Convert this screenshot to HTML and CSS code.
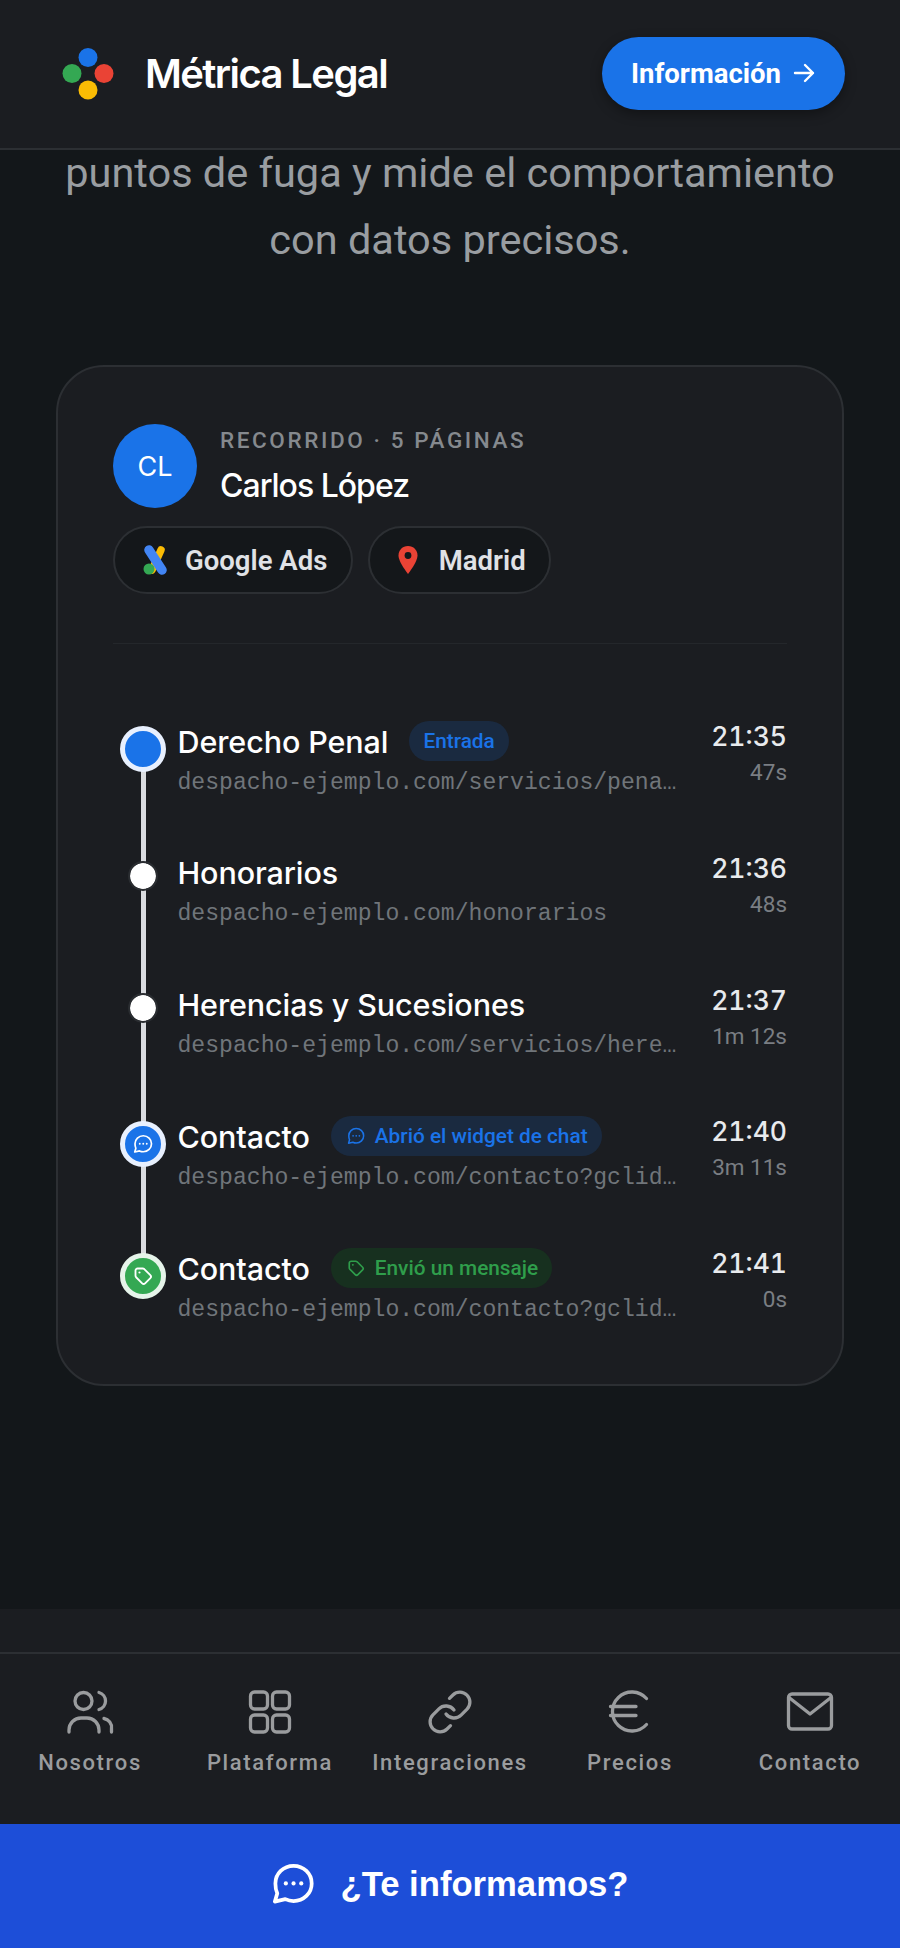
FILE: index.html
```html
<!DOCTYPE html>
<html lang="es">
<head>
<meta charset="utf-8">
<title>Métrica Legal</title>
<link rel="stylesheet" href="styles.css">
</head>
<body>
<svg class="defs" width="0" height="0" aria-hidden="true">
  <defs>
    <symbol id="chat" viewBox="0 0 40 40">
      <path d="M20.500 3.500c9.200 0 16.500 7 16.500 16s-7.300 16-16.500 16c-2.700 0-5.200-.6-7.500-1.700L3.500 36l2.200-7.500C4.500 26 4 23.100 4 19.500c0-9 7.300-16 16.500-16z" fill="none" stroke="currentColor" stroke-width="3.400" stroke-linejoin="round"/>
      <circle cx="13.500" cy="19.500" r="1.900" fill="currentColor"/>
      <circle cx="20.500" cy="19.500" r="1.900" fill="currentColor"/>
      <circle cx="27.500" cy="19.500" r="1.900" fill="currentColor"/>
    </symbol>
    <symbol id="tag" viewBox="0 0 24 24">
      <path d="M3 5.500A2.500 2.500 0 0 1 5.500 3h6.200c.7 0 1.300.3 1.800.7l7.300 7.300c1 1 1 2.500 0 3.500l-6.300 6.300c-1 1-2.500 1-3.500 0l-7.300-7.300c-.4-.5-.7-1.100-.7-1.800z" fill="none" stroke="currentColor" stroke-width="2.200" stroke-linejoin="round"/>
      <circle cx="7.800" cy="7.800" r="1.300" fill="currentColor"/>
    </symbol>
  </defs>
</svg>

<header class="topbar">
  <div class="brand">
    <svg class="brand-mark" viewBox="0 0 52 52" aria-hidden="true">
      <circle cx="26" cy="9.500" r="9.500" fill="#1a73e8"/>
      <circle cx="10" cy="25.500" r="9.500" fill="#34a853"/>
      <circle cx="42" cy="25.500" r="9.500" fill="#ea4335"/>
      <circle cx="26" cy="42" r="9.500" fill="#fbbc04"/>
    </svg>
    <span class="brand-name">Métrica Legal</span>
  </div>
  <a class="info-btn">Información
    <svg class="info-arrow" viewBox="0 0 24 24" aria-hidden="true"><path d="M3 12h18M13 4l8 8-8 8" fill="none" stroke="currentColor" stroke-width="2.400" stroke-linecap="round" stroke-linejoin="round"/></svg>
  </a>
</header>

<main class="page">
  <p class="lead">puntos de fuga y mide el comportamiento<br>con datos precisos.</p>

  <section class="card">
    <div class="person">
      <div class="avatar">CL</div>
      <div class="person-text">
        <div class="eyebrow">RECORRIDO · 5 PÁGINAS</div>
        <div class="person-name">Carlos López</div>
      </div>
    </div>
    <div class="chips">
      <span class="chip chip-source">
        <svg class="chip-ads" viewBox="0 0 24 30" aria-hidden="true">
          <path d="M18 5 9 25" stroke="#fbbc04" stroke-width="7.500" stroke-linecap="round"/>
          <circle cx="6" cy="24" r="5.500" fill="#34a853"/>
          <path d="M6 5 19 25" stroke="#4285f4" stroke-width="9.500" stroke-linecap="round"/>
        </svg>
        Google Ads
      </span>
      <span class="chip chip-place">
        <svg class="chip-pin" viewBox="0 0 20 28" aria-hidden="true">
          <path d="M10 0C4.500 0 .5 4.200.5 9.500.5 16 10 28 10 28s9.500-12 9.500-18.500C19.500 4.200 15.500 0 10 0z" fill="#ea4335"/>
          <circle cx="10" cy="9.500" r="3.400" fill="#14171a"/>
        </svg>
        Madrid
      </span>
    </div>
    <hr class="divider">

    <ol class="timeline">
      <li class="step">
        <span class="dot dot-blue"></span>
        <div class="step-main">
          <div class="step-head"><span class="step-title">Derecho Penal</span><span class="badge badge-blue">Entrada</span></div>
          <div class="step-url">despacho-ejemplo.com/servicios/pena…</div>
        </div>
        <div class="step-time"><span class="clock">21:35</span><span class="dur">47s</span></div>
      </li>
      <li class="step">
        <span class="dot dot-small"></span>
        <div class="step-main">
          <div class="step-head"><span class="step-title">Honorarios</span></div>
          <div class="step-url">despacho-ejemplo.com/honorarios</div>
        </div>
        <div class="step-time"><span class="clock">21:36</span><span class="dur">48s</span></div>
      </li>
      <li class="step">
        <span class="dot dot-small"></span>
        <div class="step-main">
          <div class="step-head"><span class="step-title">Herencias y Sucesiones</span></div>
          <div class="step-url">despacho-ejemplo.com/servicios/here…</div>
        </div>
        <div class="step-time"><span class="clock">21:37</span><span class="dur">1m 12s</span></div>
      </li>
      <li class="step">
        <span class="dot dot-blue dot-icon"><svg class="dot-glyph" aria-hidden="true"><use href="#chat"/></svg></span>
        <div class="step-main">
          <div class="step-head"><span class="step-title">Contacto</span><span class="badge badge-blue"><svg class="badge-icon" aria-hidden="true"><use href="#chat"/></svg>Abrió el widget de chat</span></div>
          <div class="step-url">despacho-ejemplo.com/contacto?gclid…</div>
        </div>
        <div class="step-time"><span class="clock">21:40</span><span class="dur">3m 11s</span></div>
      </li>
      <li class="step">
        <span class="dot dot-green dot-icon"><svg class="dot-glyph" aria-hidden="true"><use href="#tag"/></svg></span>
        <div class="step-main">
          <div class="step-head"><span class="step-title">Contacto</span><span class="badge badge-green"><svg class="badge-icon" aria-hidden="true"><use href="#tag"/></svg>Envió un mensaje</span></div>
          <div class="step-url">despacho-ejemplo.com/contacto?gclid…</div>
        </div>
        <div class="step-time"><span class="clock">21:41</span><span class="dur">0s</span></div>
      </li>
    </ol>
  </section>
</main>

<div class="band"></div>

<nav class="tabs">
  <a class="tab">
    <svg class="tab-icon" viewBox="0 0 48 48" aria-hidden="true">
      <circle cx="17.500" cy="13" r="8.500"/>
      <path d="M33 4.500a8.800 8.800 0 0 1 0 17"/>
      <path d="M3 44v-2a12 12 0 0 1 12-12h6a12 12 0 0 1 12 12v2"/>
      <path d="M38 30.500a9 9 0 0 1 7.500 10V44"/>
    </svg>
    Nosotros
  </a>
  <a class="tab">
    <svg class="tab-icon" viewBox="0 0 48 48" aria-hidden="true">
      <rect x="4.500" y="4" width="17" height="17" rx="4"/>
      <rect x="26.500" y="4" width="17" height="17" rx="4"/>
      <rect x="4.500" y="27" width="17" height="17" rx="4"/>
      <rect x="26.500" y="27" width="17" height="17" rx="4"/>
    </svg>
    Plataforma
  </a>
  <a class="tab">
    <svg class="tab-icon" viewBox="0 0 24 24" aria-hidden="true">
      <path class="thin" d="M10 13a5 5 0 0 0 7.540.54l3-3a5 5 0 0 0-7.070-7.070l-1.720 1.710"/>
      <path class="thin" d="M14 11a5 5 0 0 0-7.540-.54l-3 3a5 5 0 0 0 7.070 7.070l1.710-1.710"/>
    </svg>
    Integraciones
  </a>
  <a class="tab">
    <svg class="tab-icon" viewBox="0 0 48 48" aria-hidden="true">
      <path d="M40.500 10.500A19.500 19.500 0 1 0 40.500 36.500"/>
      <path d="M4.500 18.500H30M4.500 27.500H30"/>
    </svg>
    Precios
  </a>
  <a class="tab">
    <svg class="tab-icon" viewBox="0 0 48 48" aria-hidden="true">
      <rect x="2.500" y="6" width="43" height="35" rx="3.500"/>
      <path d="M3 9.500 24 26 45 9.500"/>
    </svg>
    Contacto
  </a>
</nav>

<a class="cta">
  <svg class="cta-icon" aria-hidden="true"><use href="#chat"/></svg>
  ¿Te informamos?
</a>
</body>
</html>
```
FILE: styles.css
```css
* { box-sizing: border-box; }
html, body { margin: 0; padding: 0; }
body {
  width: 900px;
  height: 1948px;
  overflow: hidden;
  display: flex;
  flex-direction: column;
  background: #13171a;
  font-family: Roboto, "Liberation Sans", sans-serif;
  color: #fff;
}
.defs { position: absolute; }

.topbar {
  position: relative;
  z-index: 2;
  flex: none;
  height: 150px;
  display: flex;
  align-items: center;
  justify-content: space-between;
  padding: 0 55px 2px 62px;
  background: #1b1d21;
  border-bottom: 2px solid #2c2f33;
}
.brand { display: flex; align-items: center; gap: 31px; }
.brand-mark { width: 52px; height: 52px; margin-top: 2px; }
.brand-name {
  font-family: Inter, sans-serif;
  font-size: 40px;
  font-weight: 600;
  letter-spacing: -1.600px;
  color: #fff;
}
.info-btn {
  width: 243px;
  height: 73px;
  display: flex;
  align-items: center;
  justify-content: center;
  gap: 11px;
  border-radius: 37px;
  background: #1a73e8;
  color: #fff;
  font-size: 27.500px;
  font-weight: 700;
  box-shadow: 0 4px 12px rgba(0, 0, 0, .35);
}
.info-arrow { width: 24px; height: 24px; }

.page { flex: 1; display: flex; flex-direction: column; align-items: center; }
.lead {
  margin: -11px 0 0;
  width: 100%;
  text-align: center;
  font-size: 41.500px;
  line-height: 67px;
  color: #999da1;
}
.card {
  width: 788px;
  height: 1021px;
  margin: 92px 0 0;
  padding: 57px 55px 0 55px;
  background: #1b1d21;
  border: 2px solid #2c2f33;
  border-radius: 48px;
}
.person { display: flex; align-items: center; gap: 23px; }
.avatar {
  width: 84px;
  height: 84px;
  flex: none;
  display: flex;
  align-items: center;
  justify-content: center;
  border-radius: 50%;
  background: #1a73e8;
  font-family: Inter, sans-serif;
  font-size: 27px;
  font-weight: 400;
}
.person-text { display: flex; flex-direction: column; gap: 12px; }
.eyebrow { font-size: 22.500px; font-weight: 500; letter-spacing: 2.600px; color: #85898e; line-height: 28px; }
.person-name { font-family: Inter, sans-serif; font-size: 32px; font-weight: 500; letter-spacing: -1px; line-height: 40px; color: #fff; }

.chips { display: flex; gap: 15px; margin-top: 18px; }
.chip {
  height: 68px;
  display: flex;
  align-items: center;
  padding: 0 23.500px 0 28px;
  background: #14171a;
  border: 2px solid #2c2f33;
  border-radius: 34px;
  font-size: 27.500px;
  font-weight: 600;
  color: #e0e2e6;
}
.chip-source { gap: 18px; }
.chip-place { gap: 21px; }
.chip-ads { width: 24px; height: 30px; }
.chip-pin { width: 20px; height: 28px; }
.divider { margin: 49px 0 0; border: 0; border-top: 1px solid #24272b; }

.timeline { list-style: none; margin: 77px 0 0; padding: 0; }
.step {
  position: relative;
  height: 131.750px;
  display: flex;
  gap: 11.500px;
  padding-left: 7px;
}
.step:not(:last-child)::before {
  content: "";
  position: absolute;
  left: 28px;
  top: 28px;
  width: 5px;
  height: 132px;
  background: #dadce0;
}
.dot {
  position: relative;
  flex: none;
  width: 46px;
  height: 46px;
  margin-top: 5px;
  display: flex;
  align-items: center;
  justify-content: center;
  border-radius: 50%;
}
.dot-blue { background: #1a73e8; border: 5px solid #e8f0fe; }
.dot-green { background: #34a853; border: 5px solid #e6f4ea; }
.dot-small { margin-top: 0; }
.dot-small::after {
  content: "";
  width: 26px;
  height: 26px;
  border-radius: 50%;
  background: #fff;
  border: 2px solid #2a2d31;
  background-clip: padding-box;
}
.dot-glyph { width: 20px; height: 20px; color: #fff; }
.step-main { flex: 1; min-width: 0; }
.step-head { height: 40px; display: flex; align-items: center; gap: 21px; }
.step-title { font-family: Inter, sans-serif; font-size: 30.500px; font-weight: 500; letter-spacing: -.1px; color: #fff; white-space: nowrap; }
.badge {
  height: 40px;
  display: flex;
  align-items: center;
  gap: 10px;
  padding: 0 14px;
  border-radius: 20px;
  font-size: 20.800px;
  font-weight: 500;
  white-space: nowrap;
}
.badge-blue { background: #1a2a40; color: #1a73e8; }
.badge-green { background: #17301f; color: #2f9e4b; }
.badge-icon { width: 18px; height: 18px; margin-left: 2px; }
.step-url {
  margin-top: 3.500px;
  font-family: "Liberation Mono", monospace;
  font-size: 23.100px;
  line-height: 36px;
  color: #70757a;
  white-space: nowrap;
}
.step-time {
  flex: none;
  width: 78px;
  margin-left: 16.500px;
  display: flex;
  flex-direction: column;
  align-items: flex-end;
  white-space: nowrap;
}
.clock { font-family: Inter, sans-serif; font-size: 26.500px; font-weight: 500; font-variant-numeric: tabular-nums; line-height: 30px; color: #e8eaed; }
.dur { margin-top: 7px; font-size: 22.500px; line-height: 28px; color: #7a7e83; }

.band { flex: none; height: 43px; background: #1b1d21; }
.tabs {
  flex: none;
  height: 172px;
  display: grid;
  grid-template-columns: repeat(5, 1fr);
  background: #1b1d21;
  border-top: 2px solid #2c2f33;
}
.tab {
  display: flex;
  flex-direction: column;
  align-items: center;
  padding-top: 34px;
  gap: 13px;
  font-size: 22px;
  font-weight: 500;
  letter-spacing: 1.650px;
  line-height: 28px;
  color: #9a9c9e;
}
.tab-icon { width: 48px; height: 48px; fill: none; stroke: #9a9c9e; stroke-width: 3.300; stroke-linecap: round; stroke-linejoin: round; }
.tab-icon .thin { stroke-width: 1.650; }
.cta {
  flex: none;
  height: 124px;
  display: flex;
  align-items: center;
  justify-content: center;
  gap: 25px;
  padding-bottom: 4px;
  background: #1d4ed8;
  color: #fff;
  font-family: "Liberation Sans", Arial, sans-serif;
  font-size: 34.650px;
  font-weight: 700;
}
.cta-icon { width: 44px; height: 44px; }
```
